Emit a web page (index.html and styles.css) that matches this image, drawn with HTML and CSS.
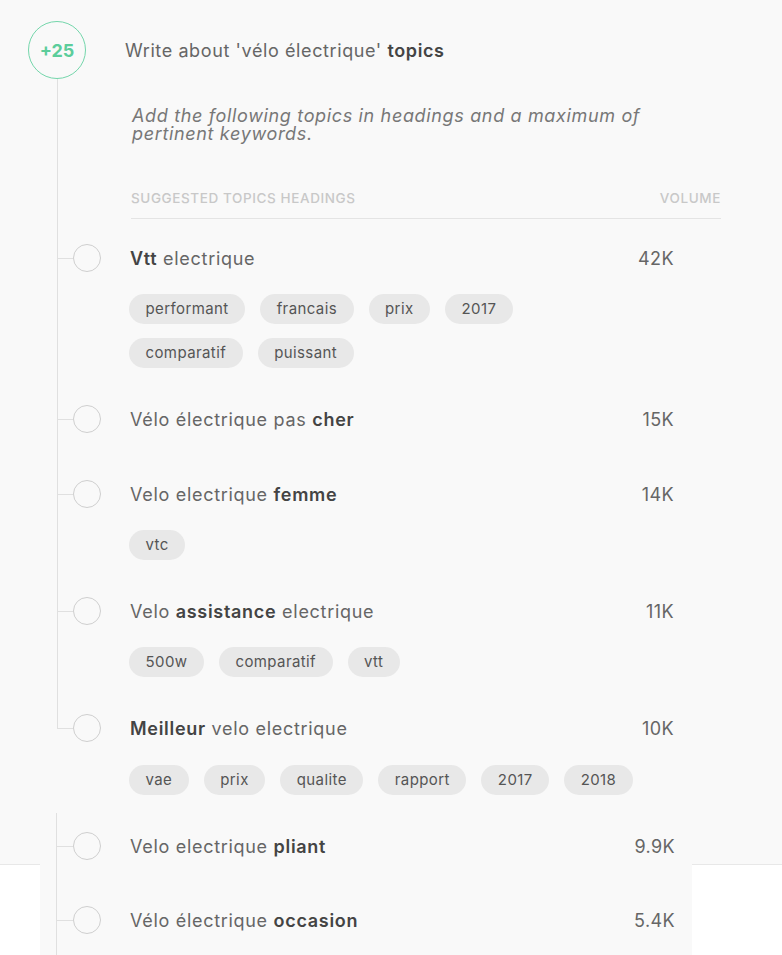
FILE: index.html
```html
<!DOCTYPE html>
<html>
<head>
<meta charset="utf-8">
<link rel="stylesheet" href="styles.css">
</head>
<body>
<div class="page">
  <div class="main">
    <div class="head">
      <div class="badge">+25</div>
      <div class="head-title">Write about 'vélo électrique' <b>topics</b></div>
    </div>
    <div class="timeline">
      <div class="intro">
        <p class="lead">Add the following topics in headings and a maximum of pertinent keywords.</p>
        <div class="cols"><span>Suggested topics headings</span><span>Volume</span></div>
      </div>
      <div class="item">
        <div class="row"><span class="tick"></span><span class="dot"></span><span class="name"><b>Vtt</b> electrique</span><span class="vol">42K</span></div>
        <div class="chips"><span class="chip">performant</span><span class="chip">francais</span><span class="chip">prix</span><span class="chip">2017</span><span class="chip">comparatif</span><span class="chip">puissant</span></div>
      </div>
      <div class="item">
        <div class="row"><span class="tick"></span><span class="dot"></span><span class="name">Vélo électrique pas <b>cher</b></span><span class="vol">15K</span></div>
      </div>
      <div class="item">
        <div class="row"><span class="tick"></span><span class="dot"></span><span class="name">Velo electrique <b>femme</b></span><span class="vol">14K</span></div>
        <div class="chips"><span class="chip">vtc</span></div>
      </div>
      <div class="item">
        <div class="row"><span class="tick"></span><span class="dot"></span><span class="name">Velo <b>assistance</b> electrique</span><span class="vol">11K</span></div>
        <div class="chips"><span class="chip">500w</span><span class="chip">comparatif</span><span class="chip">vtt</span></div>
      </div>
      <div class="item last">
        <div class="row"><span class="tick"></span><span class="dot"></span><span class="name"><b>Meilleur</b> velo electrique</span><span class="vol">10K</span></div>
        <div class="chips last-chips"><span class="chip">vae</span><span class="chip">prix</span><span class="chip">qualite</span><span class="chip">rapport</span><span class="chip">2017</span><span class="chip">2018</span></div>
      </div>
    </div>
  </div>
  <div class="ghost">
    <div class="item">
      <div class="row"><span class="tick"></span><span class="dot"></span><span class="name">Velo electrique <b>pliant</b></span><span class="vol">9.9K</span></div>
    </div>
    <div class="item">
      <div class="row"><span class="tick"></span><span class="dot"></span><span class="name">Vélo électrique <b>occasion</b></span><span class="vol">5.4K</span></div>
    </div>
  </div>
</div>
</body>
</html>
```
FILE: styles.css
```css
html, body {
  margin: 0;
  padding: 0;
  background: #ffffff;
}
body {
  font-family: Inter, "Open Sans", sans-serif;
  color: #666;
  width: 782px;
  height: 955px;
  overflow: hidden;
}
.page {
  position: relative;
  height: 955px;
}
.main {
  background: #f9f9f9;
  height: 864px;
  border-bottom: 1px solid #e8e8e8;
}
.head {
  display: flex;
  align-items: center;
  padding: 21px 0 0 28px;
}
.badge {
  width: 56px;
  height: 56px;
  border: 1.5px solid #74d6ab;
  border-radius: 50%;
  color: #5ccd9b;
  font-weight: 700;
  font-size: 18px;
  display: flex;
  align-items: center;
  justify-content: center;
  flex: none;
}
.head-title {
  margin-left: 39px;
  font-size: 18px;
  letter-spacing: 0.6px;
  color: #666;
}
.head-title b, .name b {
  color: #444;
  font-weight: 600;
}
.timeline {
  margin-left: 57px;
}
.intro {
  border-left: 1px solid #e0e0e0;
  padding: 28px 0 0 0;
}
.lead {
  margin: 0 0 0 74px;
  font-style: italic;
  font-size: 18px;
  letter-spacing: 0.65px;
  line-height: 18px;
  color: #777;
  width: 560px;
}
.cols {
  margin: 47px 0 0 73px;
  width: 590px;
  display: flex;
  justify-content: space-between;
  text-transform: uppercase;
  font-size: 13.5px;
  letter-spacing: 0.6px;
  font-weight: 500;
  color: #c8c8c8;
  line-height: 16px;
  padding-bottom: 12px;
  border-bottom: 1.5px solid #e4e4e4;
}
.item {
  position: relative;
  padding: 24px 0 45px 0;
}
.item + .item {
  padding-top: 0;
}
.timeline .item::before {
  content: "";
  position: absolute;
  left: 0;
  top: 0;
  bottom: 0;
  border-left: 1px solid #e0e0e0;
}
.timeline .item.last {
  padding-bottom: 0;
}
.timeline .item.last::before {
  bottom: auto;
  height: 15px;
}
.row {
  display: flex;
  align-items: center;
  height: 30px;
  width: 617px;
}
.tick {
  width: 16px;
  border-top: 1px solid #e0e0e0;
  flex: none;
}
.dot {
  width: 26px;
  height: 26px;
  border: 1.5px solid #cfcfcf;
  border-radius: 50%;
  flex: none;
}
.name {
  margin-left: 29px;
  font-size: 18px;
  letter-spacing: 0.7px;
  color: #666;
  flex: 1;
}
.vol {
  text-align: right;
  font-size: 18px;
  letter-spacing: 0.4px;
  color: #666;
}
.chips {
  display: flex;
  flex-wrap: wrap;
  gap: 14px 15px;
  margin: 21px 0 -9px 72px;
  width: 508px;
}
.last-chips {
  margin-top: 22px;
}
.chip {
  height: 30px;
  line-height: 30px;
  padding: 0 16.5px;
  border-radius: 15px;
  background: #e8e8e8;
  color: #555;
  font-size: 15px;
  letter-spacing: 0.4px;
}
.ghost {
  position: absolute;
  left: 40px;
  top: 813px;
  width: 652px;
  height: 142px;
  background: #f9f9f9;
  padding-left: 16px;
  box-sizing: border-box;
}
.ghost .item {
  border-left: 1px solid #e0e0e0;
  padding: 18px 0 29px 0;
}
.ghost .item + .item {
  padding-top: 15px;
  padding-bottom: 40px;
}
.ghost .row {
  width: 618px;
}
```
